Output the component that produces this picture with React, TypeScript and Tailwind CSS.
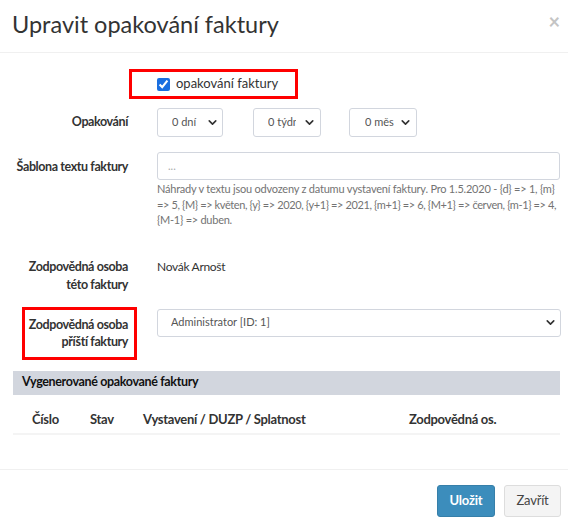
import { ChevronDown } from 'lucide-react'

function FakeSelect({ value, className, textClass = '' }: { value: string; className: string; textClass?: string }) {
  return (
    <div
      className={`flex items-center overflow-hidden rounded-[3px] border border-[#d2d6de] bg-white text-[#555] ${className}`}
    >
      <span className={`min-w-0 flex-1 overflow-hidden whitespace-nowrap ${textClass}`}>{value}</span>
      <ChevronDown className="size-[13px] shrink-0 text-[#333]" strokeWidth={3} />
    </div>
  )
}

export default function App() {
  return (
    <div className="h-[526px] w-[568px] overflow-hidden bg-white font-['Lato',sans-serif] text-[#333]">
      <div className="flex h-[53px] items-start justify-between border-b border-[#f0f0f0] pl-[12px] pr-[8px] pt-[10px]">
        <h4 className="text-[23.5px] leading-[28px] font-normal">Upravit opakování faktury</h4>
        <span className="text-[20px] leading-[22px] font-bold text-[#c4c4c4]">×</span>
      </div>

      <div className="pt-[16px]">
        <div className="ml-[129px] flex h-[30px] w-[169px] items-center border-[3px] border-[#ff0000] pl-[25px]">
          <input type="checkbox" defaultChecked className="m-0 size-[13px] accent-[#1a6fe0]" />
          <span className="ml-[6px] text-[13px]">opakování faktury</span>
        </div>

        <div className="mt-[9px] flex items-center">
          <div className="w-[128px] shrink-0 text-right text-[12.5px] font-bold tracking-[-0.4px]">Opakování</div>
          <div className="ml-[29px] grid grid-cols-[96px_96px_96px] text-[11px]">
            <FakeSelect value="0 dní" className="h-[29px] w-[66px] pl-[14px] pr-[3px]" />
            <FakeSelect value="0 týdny" className="h-[29px] w-[68px] pl-[14px] pr-[4px]" textClass="mr-[7px]" />
            <FakeSelect value="0 měs" className="h-[29px] w-[68px] pl-[15px] pr-[4px]" />
          </div>
        </div>

        <div className="mt-[15px] flex items-start">
          <div className="mt-[6px] w-[128px] shrink-0 text-right text-[12.5px] leading-[18px] font-bold tracking-[-0.4px]">
            Šablona textu faktury
          </div>
          <div className="ml-[29px] w-[403px]">
            <div className="flex h-[28px] items-center rounded-[3px] border border-[#d2d6de] pl-[10px] text-[11px] text-[#aaa]">
              ...
            </div>
            <div className="mt-[1px] whitespace-nowrap text-[11px] leading-[15.5px] text-[#737373]">
              <p className="tracking-[-0.22px]">
                Náhrady v textu jsou odvozeny z datumu vystavení faktury. Pro 1.5.2020 - {'{d}'} =&gt; 1, {'{m}'}
              </p>
              <p className="tracking-[-0.38px]">
                =&gt; 5, {'{M}'} =&gt; květen, {'{y}'} =&gt; 2020, {'{y+1}'} =&gt; 2021, {'{m+1}'} =&gt; 6, {'{M+1}'} =&gt; červen, {'{m-1}'} =&gt; 4,
              </p>
              <p className="tracking-[-0.25px]">{'{M-1}'} =&gt; duben.</p>
            </div>
          </div>
        </div>

        <div className="mt-[30px] flex items-start">
          <div className="w-[128px] shrink-0 whitespace-nowrap text-right text-[12.5px] leading-[18px] font-bold tracking-[-0.4px]">
            Zodpovědná osoba
            <br />
            této faktury
          </div>
          <div className="ml-[29px] text-[12px] leading-[18px] tracking-[-0.3px]">Novák Arnošt</div>
        </div>

        <div className="mt-[13px] flex items-start">
          <div className="ml-[22px] flex h-[53px] w-[115px] shrink-0 items-center justify-end whitespace-nowrap border-[3px] border-[#ff0000] pr-[6px] text-right text-[12.5px] leading-[17px] font-bold tracking-[-0.4px]">
            <div>
              Zodpovědná osoba
              <br />
              příští faktury
            </div>
          </div>
          <FakeSelect
            value="Administrator [ID: 1]"
            className="mt-[2px] ml-[20px] h-[28px] w-[404px] pl-[13px] pr-[3px] text-[11px]"
          />
        </div>

        <div className="mr-[8px] ml-[13px] mt-[11px]">
          <div className="flex h-[24px] items-center bg-[#d2d6de] pl-[9px] text-[12.5px] font-bold tracking-[-0.35px] text-[#111]">
            Vygenerované opakované faktury
          </div>
          <div className="flex h-[40px] items-center border-b-2 border-[#f4f4f4] pt-[12px] text-[13px] font-bold tracking-[-0.3px]">
            <span className="ml-[19px] w-[58px]">Číslo</span>
            <span className="w-[53px]">Stav</span>
            <span className="w-[266px]">Vystavení / DUZP / Splatnost</span>
            <span>Zodpovědná os.</span>
          </div>
        </div>

        <div className="mt-[34px] flex justify-end gap-[9px] border-t border-[#f0f0f0] pr-[7px] pt-[15px]">
          <button
            type="button"
            className="h-[32px] w-[58px] rounded-[3px] border border-[#367fa9] bg-[#3c8dbc] text-[13px] font-bold tracking-[-0.2px] text-white"
          >
            Uložit
          </button>
          <button
            type="button"
            className="h-[32px] w-[57px] rounded-[3px] border border-[#ddd] bg-[#f4f4f4] text-[13px] tracking-[-0.2px] text-[#444]"
          >
            Zavřít
          </button>
        </div>
      </div>
    </div>
  )
}
